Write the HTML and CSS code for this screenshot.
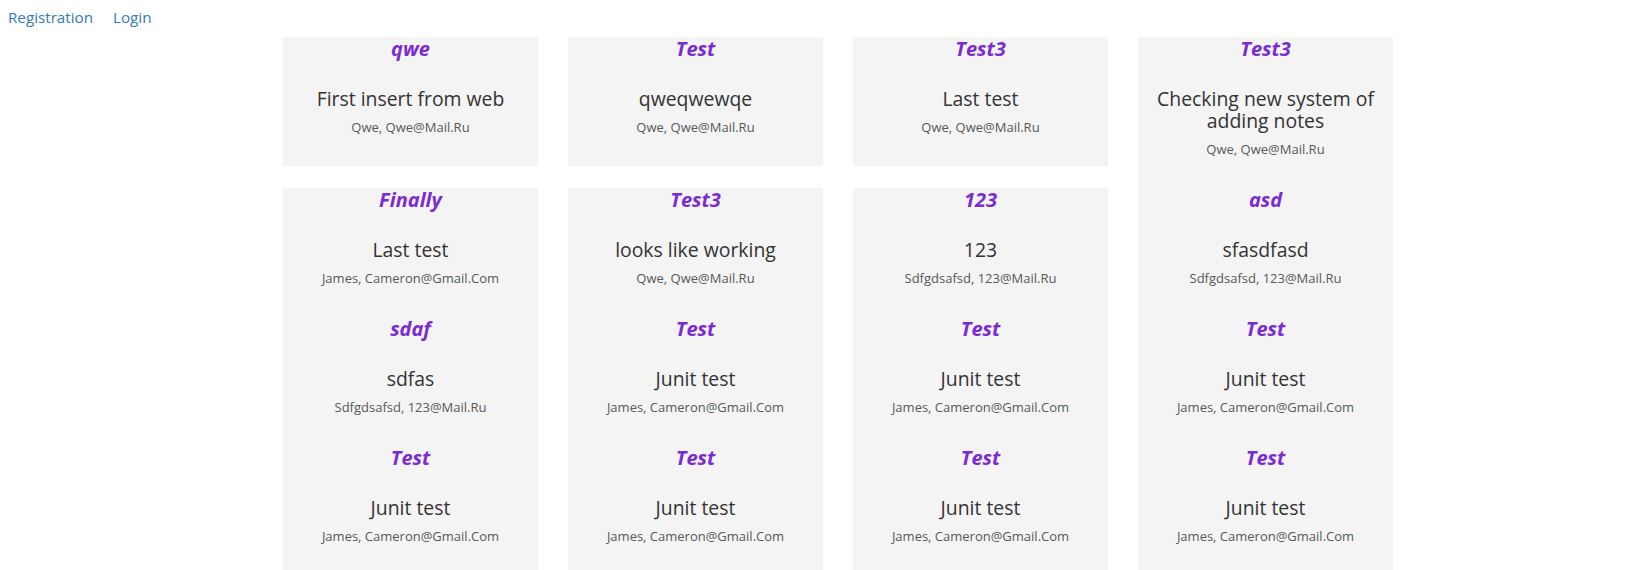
FILE: index.html
```html
<!DOCTYPE html>
<html>
<head>
<meta charset="utf-8">
<link rel="stylesheet" href="styles.css">
</head>
<body>
<nav class="nav">
  <a href="#" class="nav-link">Registration</a>
  <a href="#" class="nav-link">Login</a>
</nav>
<main class="notes">
  <div class="note"><h5 class="note-title">qwe</h5><p class="note-text">First insert from web</p><p class="note-author">Qwe, Qwe@Mail.Ru</p></div>
  <div class="note"><h5 class="note-title">Test</h5><p class="note-text">qweqwewqe</p><p class="note-author">Qwe, Qwe@Mail.Ru</p></div>
  <div class="note"><h5 class="note-title">Test3</h5><p class="note-text">Last test</p><p class="note-author">Qwe, Qwe@Mail.Ru</p></div>
  <div class="note"><h5 class="note-title">Test3</h5><p class="note-text">Checking new system of adding notes</p><p class="note-author">Qwe, Qwe@Mail.Ru</p></div>

  <div class="note"><h5 class="note-title">Finally</h5><p class="note-text">Last test</p><p class="note-author">James, Cameron@Gmail.Com</p></div>
  <div class="note"><h5 class="note-title">Test3</h5><p class="note-text">looks like working</p><p class="note-author">Qwe, Qwe@Mail.Ru</p></div>
  <div class="note"><h5 class="note-title">123</h5><p class="note-text">123</p><p class="note-author">Sdfgdsafsd, 123@Mail.Ru</p></div>
  <div class="note"><h5 class="note-title">asd</h5><p class="note-text">sfasdfasd</p><p class="note-author">Sdfgdsafsd, 123@Mail.Ru</p></div>

  <div class="note"><h5 class="note-title">sdaf</h5><p class="note-text">sdfas</p><p class="note-author">Sdfgdsafsd, 123@Mail.Ru</p></div>
  <div class="note"><h5 class="note-title">Test</h5><p class="note-text">Junit test</p><p class="note-author">James, Cameron@Gmail.Com</p></div>
  <div class="note"><h5 class="note-title">Test</h5><p class="note-text">Junit test</p><p class="note-author">James, Cameron@Gmail.Com</p></div>
  <div class="note"><h5 class="note-title">Test</h5><p class="note-text">Junit test</p><p class="note-author">James, Cameron@Gmail.Com</p></div>

  <div class="note"><h5 class="note-title">Test</h5><p class="note-text">Junit test</p><p class="note-author">James, Cameron@Gmail.Com</p></div>
  <div class="note"><h5 class="note-title">Test</h5><p class="note-text">Junit test</p><p class="note-author">James, Cameron@Gmail.Com</p></div>
  <div class="note"><h5 class="note-title">Test</h5><p class="note-text">Junit test</p><p class="note-author">James, Cameron@Gmail.Com</p></div>
  <div class="note"><h5 class="note-title">Test</h5><p class="note-text">Junit test</p><p class="note-author">James, Cameron@Gmail.Com</p></div>
</main>
</body>
</html>
```

FILE: styles.css
```css
html, body {
  background: #ffffff;
}
body {
  margin: 8px;
  font-family: "Open Sans", "Noto Sans", sans-serif;
  color: #333333;
}
.nav {
  display: flex;
  align-items: flex-start;
  gap: 20px;
  height: 22px;
  font-size: 15.2px;
  line-height: 18px;
}
.nav-link {
  color: #337ab7;
  text-decoration: none;
}
.notes {
  display: grid;
  grid-template-columns: repeat(4, 255px);
  column-gap: 30px;
  align-items: start;
  margin-top: 7px;
  padding-left: 275px;
}
.note {
  background: #f4f4f4;
  text-align: center;
  padding: 0 10px 30px;
}
.note-title {
  margin: 0;
  font-size: 20px;
  line-height: 24px;
  font-style: italic;
  font-weight: 700;
  color: #7b2bd0;
}
.note-text {
  margin: 27px 0 0;
  font-size: 19.4px;
  line-height: 22px;
  color: #333333;
}
.note-author {
  margin: 8px 0 0;
  font-size: 13px;
  line-height: 18px;
  font-weight: 500;
  color: #585858;
  text-transform: capitalize;
}
```
